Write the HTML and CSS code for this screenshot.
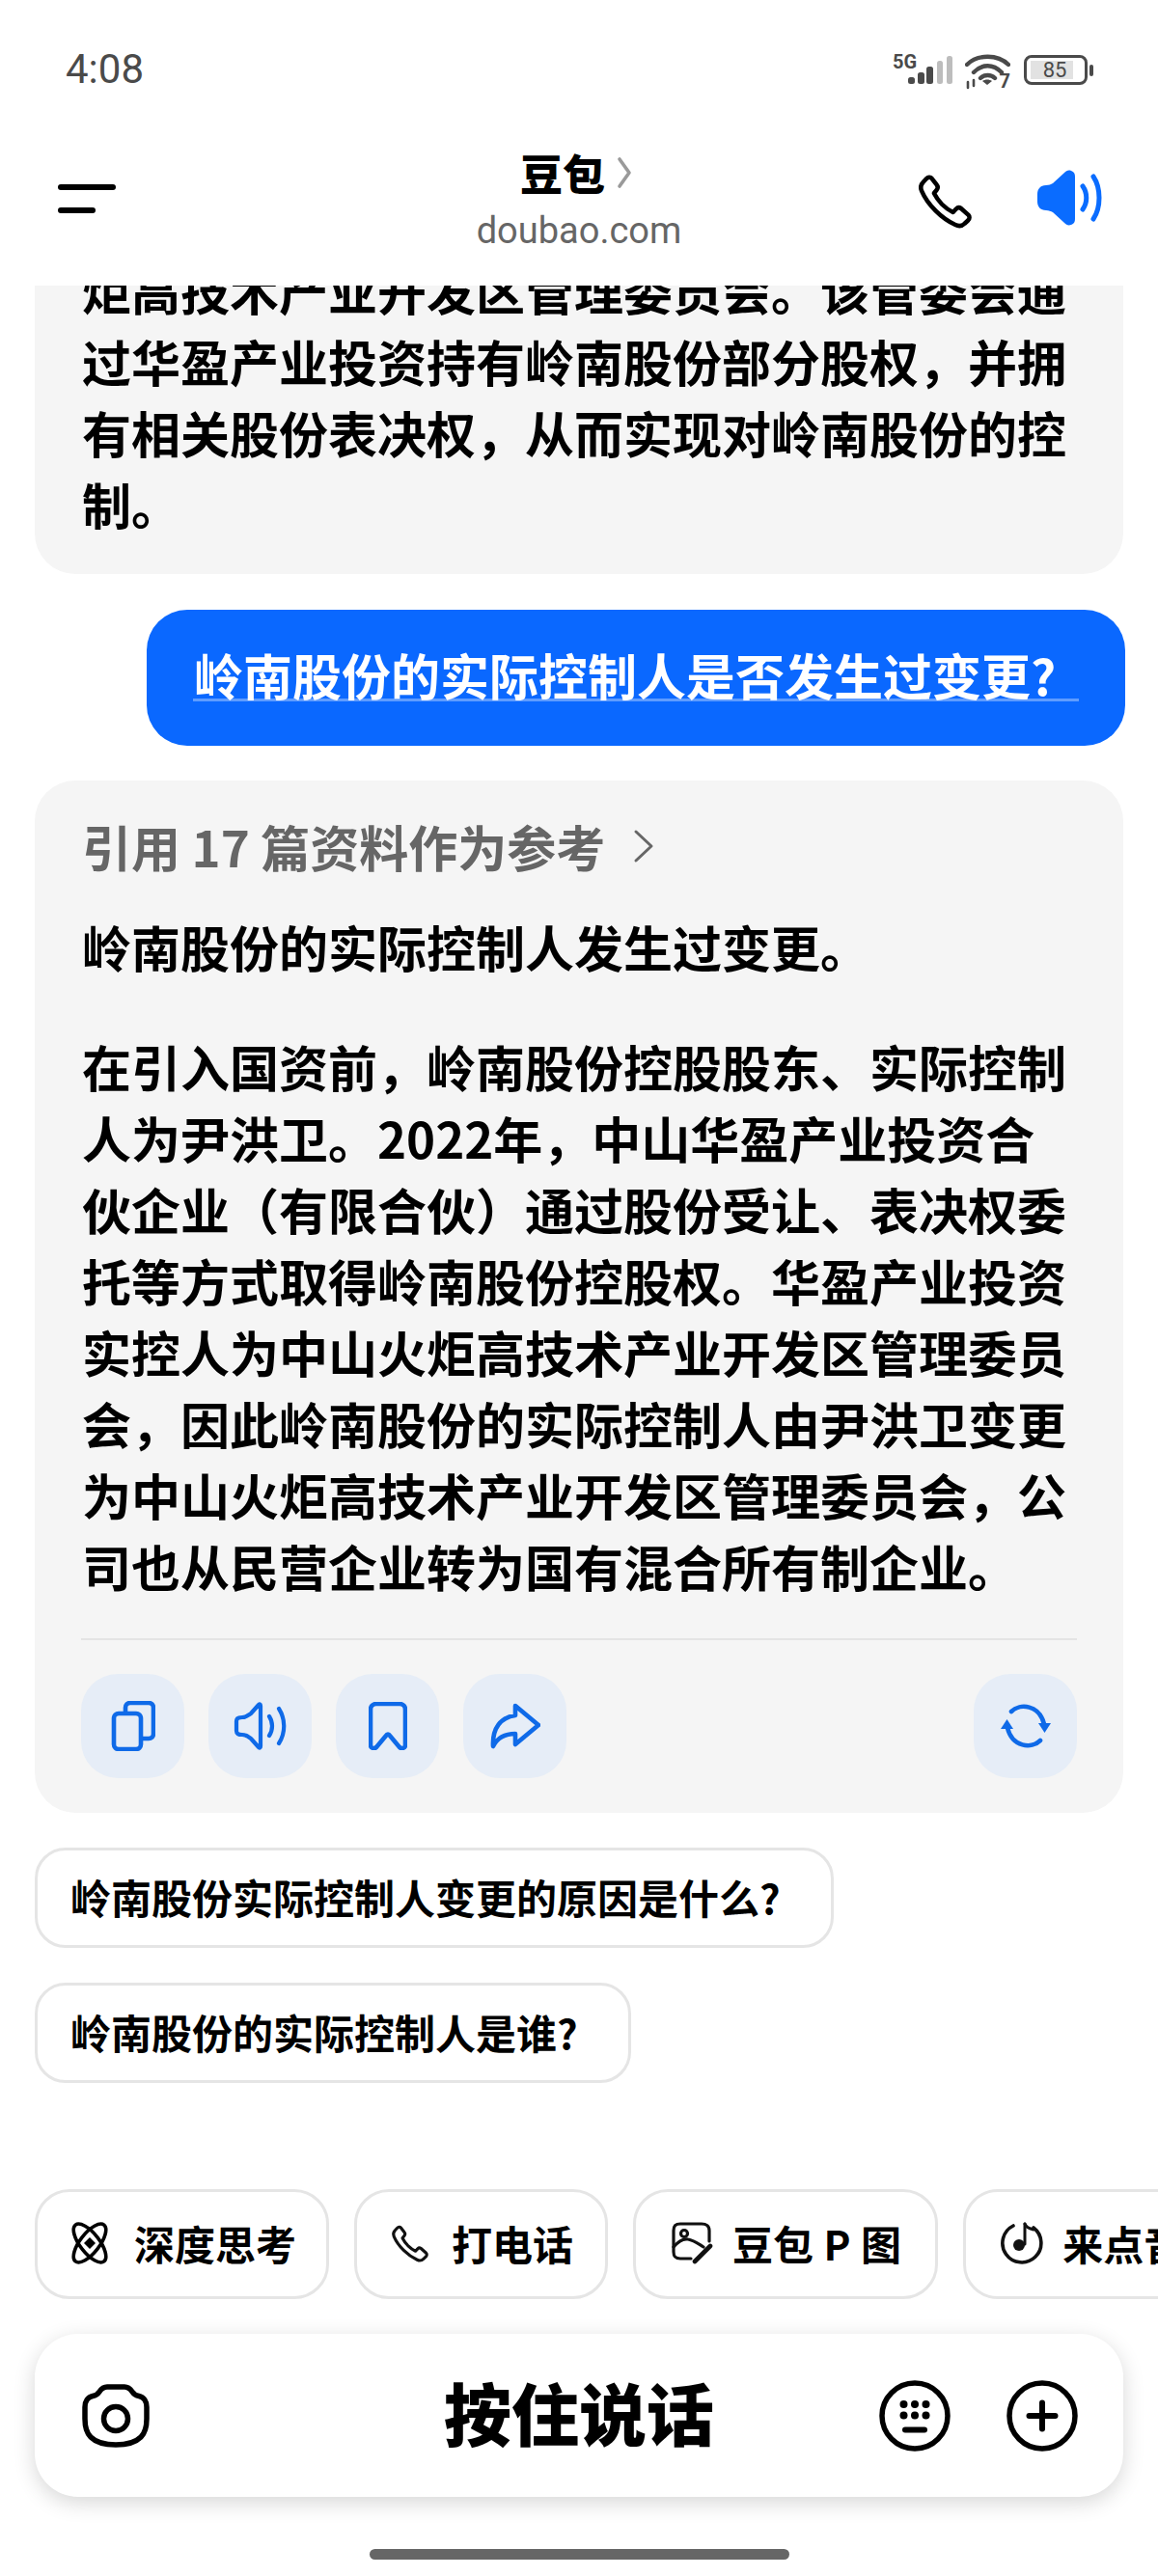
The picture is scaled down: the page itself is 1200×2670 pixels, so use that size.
FILE: index.html
```html
<!DOCTYPE html>
<html lang="zh-CN">
<head>
    <meta charset="UTF-8">
    <title>豆包</title>
    <link rel="stylesheet" href="styles.css">
</head>
<body>
<div class="phone">
    <div class="statusbar">
        <span class="time">4:08</span>
        <div class="status-icons">
            <div class="signal">
                <span class="five-g">5G</span>
                <svg width="64" height="36" viewBox="0 0 64 36">
                    <rect x="16" y="25" width="7" height="7" rx="2.5" fill="#4a4a4a"/>
                    <rect x="26" y="20" width="7" height="12" rx="2.5" fill="#4a4a4a"/>
                    <rect x="35" y="14" width="7" height="18" rx="2.5" fill="#4a4a4a"/>
                    <rect x="46" y="8" width="6" height="24" rx="2.5" fill="#bdbdbd"/>
                    <rect x="56" y="3" width="6" height="29" rx="2.5" fill="#bdbdbd"/>
                </svg>
            </div>
            <div class="wifi">
                <svg width="47" height="38" viewBox="0 0 47 38" fill="none" stroke="#4a4a4a" stroke-width="4.4" stroke-linecap="round">
                    <path d="M2 12C13 1 34 1 45 12"/>
                    <path d="M9 20C18 11 29 11 38 20"/>
                    <path d="M16 26C20 22 27 22 31 26"/>
                    <path d="M23 33l-5-4c3-2 7-2 10 0z" fill="#4a4a4a" stroke="none"/>
                    <path d="M3 30v6M9 28v6" stroke-width="2.6"/>
                </svg>
                <span class="wifi-seven">7</span>
            </div>
            <div class="battery">
                <div class="battery-body">
                    <span class="battery-fill"></span>
                    <span class="battery-num">85</span>
                </div>
                <span class="battery-nub"></span>
            </div>
        </div>
    </div>

    <header class="topbar">
        <div class="menu-btn">
            <span class="menu-long"></span>
            <span class="menu-short"></span>
        </div>
        <div class="title-box">
            <div class="title">豆包
                <svg class="title-arrow" width="16" height="34" viewBox="0 0 16 34" fill="none" stroke="#9a9a9a" stroke-width="3.6" stroke-linecap="round" stroke-linejoin="round"><path d="M3 3l10 14L3 31"/></svg>
            </div>
            <div class="domain">doubao.com</div>
        </div>
        <div class="top-actions">
            <svg width="64" height="64" viewBox="0 0 24 24" fill="none" stroke="#000" stroke-width="1.7" stroke-linejoin="round"><path d="M21.6 17.6c.5.5.5 1.4-.1 2l-1.4 1.3c-1 1-2.4 1.1-3.6.5-2.8-1.3-5.4-3.2-7.6-5.4-2.3-2.3-4.3-5-5.5-7.8-.5-1.2-.3-2.5.6-3.4l1.3-1.4c.6-.6 1.5-.7 2-.1l2 2.6c.5.6.4 1.4-.1 2L8.2 9.1c.8 1.6 1.9 3 3.1 4.3 1.3 1.3 2.7 2.3 4.3 3.1l1.2-1.3c.5-.5 1.3-.6 1.9-.2z"/></svg>
            <svg width="68" height="58" viewBox="0 0 68 58" fill="none" stroke="#0a6cff" stroke-width="5" stroke-linecap="round">
                <path d="M36 1c-3-1-5 0-7 2L17 14c-2 1-4 2-7 2-6 0-9 4-9 9v8c0 5 3 9 9 9 3 0 5 1 7 2l12 11c2 2 4 3 7 2 3-1 4-3 4-6V7c0-3-1-5-4-6z" fill="#0a6cff" stroke="none"/>
                <path d="M48 17c5 7 5 17 0 24"/>
                <path d="M59 7c8 12 8 32 0 44"/>
            </svg>
        </div>
    </header>

    <main class="chat">
        <div class="bubble bubble-clipped">
            炬高技术产业开发区管理委员会。该管委会通<br>
            过华盈产业投资持有岭南股份部分股权，并拥<br>
            有相关股份表决权，从而实现对岭南股份的控<br>
            制。
        </div>

        <div class="user-msg">
            <span class="user-text">岭南股份的实际控制人是否发生过变更?</span>
            <span class="user-line"></span>
        </div>

        <div class="bubble answer">
            <div class="refs">引用 17 篇资料作为参考
                <svg width="24" height="36" viewBox="0 0 24 36" fill="none" stroke="#666" stroke-width="3" stroke-linecap="round" stroke-linejoin="round"><path d="M4 3l16 15L4 33"/></svg>
            </div>
            <p class="para">岭南股份的实际控制人发生过变更。</p>
            <p class="para para-last">
                在引入国资前，岭南股份控股股东、实际控制<br>
                人为尹洪卫。2022年，中山华盈产业投资合<br>
                伙企业（有限合伙）通过股份受让、表决权委<br>
                托等方式取得岭南股份控股权。华盈产业投资<br>
                实控人为中山火炬高技术产业开发区管理委员<br>
                会，因此岭南股份的实际控制人由尹洪卫变更<br>
                为中山火炬高技术产业开发区管理委员会，公<br>
                司也从民营企业转为国有混合所有制企业。
            </p>
            <div class="divider"></div>
            <div class="actions">
                <div class="act">
                    <svg width="46" height="52" viewBox="0 0 46 52" fill="none" stroke="#0f6ae8" stroke-width="4.6" stroke-linejoin="round"><path d="M15 13V7c0-3 2-5 5-5h19c3 0 5 2 5 5v27c0 3-2 5-5 5h-8"/><rect x="3" y="13" width="28" height="37" rx="5"/></svg>
                </div>
                <div class="act">
                    <svg width="56" height="50" viewBox="0 0 56 50" fill="none" stroke="#0f6ae8" stroke-width="4.2" stroke-linecap="round" stroke-linejoin="round"><path d="M26 3c1-1 2-1 2 1v42c0 2-1 2-2 1L18 38c-3-2-5-4-9-4-4 0-6-1-6-4V20c0-3 2-4 6-4 4 0 6-2 9-4z"/><path d="M37 15c4 6 4 14 0 20"/><path d="M47 7c7 11 7 25 0 36"/></svg>
                </div>
                <div class="act">
                    <svg width="40" height="50" viewBox="0 0 40 50" fill="none" stroke="#0f6ae8" stroke-width="4.6" stroke-linejoin="round"><path d="M2 8c0-3 2-6 6-6h24c4 0 6 3 6 6v37c0 3-4 4-6 2L22 35c-1-2-3-2-4 0L8 47c-2 2-6 1-6-2z"/></svg>
                </div>
                <div class="act">
                    <svg width="52" height="48" viewBox="0 0 52 48" fill="none" stroke="#0f6ae8" stroke-width="4.6" stroke-linecap="round" stroke-linejoin="round"><path d="M26 3l24 20-24 20v-11c-10 0-18 3-23 13C2 26 11 15 26 13z"/></svg>
                </div>
                <div class="act act-end">
                    <svg width="56" height="46" viewBox="0 0 56 46" fill="none" stroke="#0f6ae8" stroke-width="4.6" stroke-linecap="round"><path d="M13 8C22-1 42 1 47 21"/><path d="M43 38C34 47 14 45 9 25"/><path d="M41 20h13l-6.5 10z" fill="#0f6ae8" stroke="none"/><path d="M2 26h13L8.500 16z" fill="#0f6ae8" stroke="none"/></svg>
                </div>
            </div>
        </div>

        <div class="suggest">岭南股份实际控制人变更的原因是什么?</div>
        <div class="suggest">岭南股份的实际控制人是谁?</div>
    </main>

    <div class="tools">
        <div class="tool">
            <svg width="44" height="44" viewBox="0 0 44 44" fill="none" stroke="#000" stroke-width="3.6">
                <ellipse cx="22" cy="22" rx="10" ry="24" transform="rotate(-38 22 22)"/>
                <ellipse cx="22" cy="22" rx="10" ry="24" transform="rotate(38 22 22)"/>
                <path d="M22 16l6 6-6 6-6-6z" fill="#000" stroke="none"/>
            </svg>
            <span>深度思考</span>
        </div>
        <div class="tool tool-call">
            <svg width="44" height="44" viewBox="0 0 24 24" fill="none" stroke="#111" stroke-width="1.7" stroke-linejoin="round"><path d="M21.6 17.6c.5.5.5 1.4-.1 2l-1.4 1.3c-1 1-2.4 1.1-3.6.5-2.8-1.3-5.4-3.2-7.6-5.4-2.3-2.3-4.3-5-5.5-7.8-.5-1.2-.3-2.5.6-3.4l1.3-1.4c.6-.6 1.5-.7 2-.1l2 2.6c.5.6.4 1.4-.1 2L8.2 9.1c.8 1.6 1.9 3 3.1 4.3 1.3 1.3 2.7 2.3 4.3 3.1l1.2-1.3c.5-.5 1.3-.6 1.9-.2z"/></svg>
            <span>打电话</span>
        </div>
        <div class="tool tool-pic">
            <svg width="44" height="44" viewBox="0 0 44 44" fill="none" stroke="#111" stroke-width="3.2" stroke-linecap="round" stroke-linejoin="round">
                <path d="M39 20V9c0-5-3-7-8-7H9C4 2 2 4 2 9v22c0 5 2 7 7 7h11"/>
                <circle cx="13" cy="12" r="3.5"/>
                <path d="M2 26c5-6 10-9 15-8 6 1 11 5 16 8"/>
                <path d="M24 41l16-16" stroke-width="4.6"/>
            </svg>
            <span>豆包 P 图</span>
        </div>
        <div class="tool tool-music">
            <svg width="44" height="44" viewBox="0 0 44 44" fill="none" stroke="#111" stroke-width="3.6" stroke-linecap="round">
                <path d="M13 4A20 20 0 1 0 34 6"/>
                <path d="M25 23V2" stroke-width="3"/>
                <path d="M25 2c1 3 5 5 9 6" stroke-width="3"/>
                <circle cx="19" cy="24" r="6" fill="#111" stroke="none"/>
            </svg>
            <span>来点音乐</span>
        </div>
    </div>

    <div class="inputbar">
        <svg class="cam" width="70" height="66" viewBox="0 0 70 66" fill="none" stroke="#000" stroke-width="5.500" stroke-linejoin="round">
            <path d="M26 3h18c4 0 6 2 8 5 2 3 4 4 7 4.500 5 1 8 5.500 8 11.500v12c0 8-1 14-6 19-6 6-16 8-26 8s-20-2-26-8c-5-5-6-11-6-19V24c0-6 3-10.500 8-11.500 3-.5 5-1.500 7-4.500 2-3 4-5 8-5z"/>
            <circle cx="35" cy="36" r="12.500"/>
        </svg>
        <span class="hold">按住说话</span>
        <div class="input-right">
            <svg width="74" height="74" viewBox="0 0 74 74" fill="none" stroke="#000" stroke-width="5.500">
                <circle cx="37" cy="37" r="34"/>
                <g fill="#000" stroke="none">
                    <circle cx="25.500" cy="25" r="4"/><circle cx="37" cy="25" r="4"/><circle cx="48.500" cy="25" r="4"/>
                    <circle cx="25.500" cy="36.500" r="4"/><circle cx="37" cy="36.500" r="4"/><circle cx="48.500" cy="36.500" r="4"/>
                </g>
                <path d="M27 51.500h20" stroke-width="6" stroke-linecap="round"/>
            </svg>
            <svg width="74" height="74" viewBox="0 0 74 74" fill="none" stroke="#000" stroke-width="5.500" stroke-linecap="round">
                <circle cx="37" cy="37" r="34"/>
                <path d="M37 23.500v27M23.500 37h27" stroke-width="6"/>
            </svg>
        </div>
    </div>

    <div class="homebar"></div>
</div>
</body>
</html>
```

FILE: styles.css
```css
* {
    box-sizing: border-box;
}

html, body {
    margin: 0;
    padding: 0;
    background: #fff;
}

body {
    font-family: "Noto Sans CJK SC", "Liberation Sans", sans-serif;
    color: #000;
}

.phone {
    width: 1200px;
    height: 2670px;
    overflow: hidden;
    display: flex;
    flex-direction: column;
}

/* status bar */
.statusbar {
    height: 140px;
    padding: 47px 67px 0 68px;
    display: flex;
    justify-content: space-between;
    align-items: flex-start;
    flex-shrink: 0;
}

.time {
    font-family: "Roboto", sans-serif;
    font-size: 42px;
    line-height: 50px;
    color: #4a4a4a;
}

.status-icons {
    display: flex;
    align-items: flex-start;
    gap: 11px;
    padding-top: 8px;
}

.signal, .wifi {
    position: relative;
}

.five-g {
    position: absolute;
    left: 0;
    top: -1px;
    font-family: "Roboto", sans-serif;
    font-size: 20px;
    line-height: 20px;
    font-weight: 700;
    color: #4a4a4a;
}

.wifi-seven {
    position: absolute;
    right: 0;
    top: 19px;
    font-family: "Roboto", sans-serif;
    font-size: 20px;
    line-height: 20px;
    font-weight: 700;
    color: #4a4a4a;
}

.battery {
    display: flex;
    align-items: center;
    gap: 2px;
    margin-left: 3px;
    padding-top: 2px;
}

.battery-body {
    width: 66px;
    height: 31px;
    border: 3px solid #4a4a4a;
    border-radius: 8px;
    padding: 3px 4px;
    position: relative;
}

.battery-fill {
    display: block;
    width: 44px;
    height: 100%;
    background: #e2e2e2;
}

.battery-num {
    position: absolute;
    left: 0;
    right: 2px;
    top: -2px;
    text-align: center;
    font-family: "Roboto", sans-serif;
    font-size: 22px;
    line-height: 29px;
    color: #4a4a4a;
}

.battery-nub {
    width: 4px;
    height: 12px;
    border-radius: 2px;
    background: #4a4a4a;
}

/* top nav */
.topbar {
    height: 156px;
    padding: 0 58px 0 60px;
    position: relative;
    display: flex;
    justify-content: space-between;
    flex-shrink: 0;
}

.menu-btn {
    padding-top: 51px;
    display: flex;
    flex-direction: column;
    gap: 18px;
}

.menu-long, .menu-short {
    display: block;
    height: 6px;
    border-radius: 3px;
    background: #000;
}

.menu-long {
    width: 60px;
}

.menu-short {
    width: 39px;
}

.title-box {
    position: absolute;
    left: 0;
    right: 0;
    top: 10px;
    text-align: center;
}

.title {
    font-size: 44px;
    line-height: 58px;
    font-weight: 900;
    display: flex;
    justify-content: center;
    align-items: center;
    gap: 12px;
    padding-right: 6px;
}

.domain {
    font-family: "Roboto", sans-serif;
    font-size: 38px;
    line-height: 44px;
    color: #666;
    margin-top: 9px;
}

.top-actions {
    display: flex;
    align-items: flex-start;
    gap: 64px;
    padding-top: 36px;
}

/* chat list */
.chat {
    height: 1973px;
    overflow: hidden;
    padding: 0 36px;
    display: flex;
    flex-direction: column;
    align-items: flex-start;
    gap: 36px;
    flex-shrink: 0;
}

.bubble {
    width: 1128px;
    background: #f5f5f5;
    border-radius: 42px;
    padding: 0 49px;
    font-size: 51px;
    line-height: 74px;
    font-weight: 700;
    white-space: nowrap;
    flex-shrink: 0;
}

.bubble-clipped {
    margin-top: -42px;
    padding-top: 9px;
    padding-bottom: 36px;
    margin-bottom: 1px;
}

.user-msg {
    align-self: flex-end;
    position: relative;
    width: 1014px;
    height: 141px;
    margin-right: -2px;
    background: #0a68ff;
    border-radius: 42px;
    padding: 30px 0 0 49px;
    color: #fff;
    font-size: 51px;
    line-height: 74px;
    font-weight: 700;
    white-space: nowrap;
    flex-shrink: 0;
}

.user-line {
    position: absolute;
    left: 48px;
    right: 48px;
    top: 92px;
    height: 3px;
    background: rgba(255, 255, 255, 0.35);
}

.answer {
    height: 1070px;
    padding-top: 31px;
}

.refs {
    color: #666;
    line-height: 74px;
    display: flex;
    align-items: center;
    gap: 28px;
    margin-bottom: 30px;
}

.para {
    margin: 0 0 50px;
}

.para-last {
    margin-bottom: 38px;
}

.divider {
    height: 2px;
    width: 1032px;
    margin-left: -1px;
    background: #e4e4e4;
}

.actions {
    display: flex;
    gap: 25px;
    width: 1032px;
    margin-left: -1px;
    margin-top: 35px;
}

.act {
    width: 107px;
    height: 108px;
    border-radius: 38px;
    background: #e6edf7;
    display: flex;
    align-items: center;
    justify-content: center;
}

.act-end {
    margin-left: auto;
}

.suggest {
    height: 104px;
    border: 3px solid #e5e5e5;
    border-radius: 32px;
    background: #fff;
    padding: 0 52px 3px 34px;
    display: flex;
    align-items: center;
    font-size: 42px;
    font-weight: 700;
    white-space: nowrap;
    flex-shrink: 0;
}

/* tool chips */
.tools {
    padding-left: 36px;
    display: flex;
    gap: 26px;
    flex-shrink: 0;
}

.tool {
    height: 114px;
    border: 3px solid #e5e5e5;
    border-radius: 36px;
    background: #fff;
    display: flex;
    align-items: center;
    gap: 24px;
    padding: 0 31px 3px 32px;
    font-size: 42px;
    font-weight: 700;
    word-spacing: 1px;
    white-space: nowrap;
    flex-shrink: 0;
}

.tool-call {
    gap: 22px;
    padding-right: 33px;
}

.tool-pic {
    gap: 19px;
    padding-left: 37px;
    padding-right: 35px;
}

.tool-music {
    gap: 20px;
    padding-left: 36px;
}

/* input bar */
.inputbar {
    margin: 36px 36px 0;
    height: 169px;
    border-radius: 45px;
    background: #fff;
    box-shadow: 0 6px 22px rgba(0, 0, 0, 0.16);
    padding: 0 47px 0 49px;
    position: relative;
    display: flex;
    align-items: center;
    justify-content: space-between;
    flex-shrink: 0;
}

.hold {
    position: absolute;
    left: 0;
    right: 0;
    top: 36px;
    text-align: center;
    font-size: 70px;
    font-weight: 900;
    line-height: 90px;
}

.input-right {
    display: flex;
    gap: 58px;
}

.homebar {
    margin: 54px auto 0;
    width: 435px;
    height: 11px;
    border-radius: 6px;
    background: #666;
    flex-shrink: 0;
}
```
